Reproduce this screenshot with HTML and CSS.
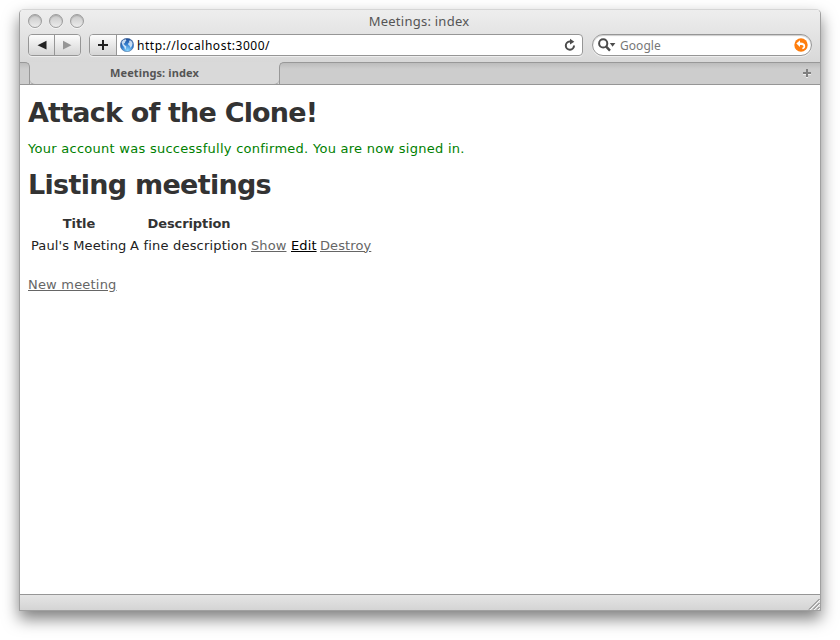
FILE: index.html
```html
<!DOCTYPE html>
<html lang="en">
<head>
<meta charset="utf-8">
<title>Meetings: index</title>
<link rel="stylesheet" href="styles.css">
</head>
<body>
<div class="window">
  <header class="chrome">
    <div class="titlebar">
      <div class="lights"><i></i><i></i><i></i></div>
      <span class="window-title">Meetings: index</span>
    </div>
    <div class="toolbar">
      <div class="nav">
        <button class="nav-button" aria-label="Back"><svg width="26" height="20" viewBox="0 0 26 20"><path d="M8.500 10.200 17.500 5.800v8.800z" fill="#222"/></svg></button>
        <button class="nav-button" aria-label="Forward"><svg width="26" height="20" viewBox="0 0 26 20"><path d="M16.500 10.200 8 5.800v8.800z" fill="#969696"/></svg></button>
      </div>
      <div class="address">
        <button class="add" aria-label="Add bookmark"><svg width="26" height="20" viewBox="0 0 26 20"><path d="M13 5v10M8 10h10" stroke="#222" stroke-width="2"/></svg></button>
        <svg class="globe" width="14" height="14" viewBox="0 0 14 14">
          <defs><radialGradient id="sea" cx=".55" cy=".9" r=".9"><stop offset="0" stop-color="#8ad6ff"/><stop offset=".5" stop-color="#3580d0"/><stop offset="1" stop-color="#1c4a96"/></radialGradient></defs>
          <circle cx="7" cy="7" r="6.700" fill="url(#sea)" stroke="#42628f" stroke-width=".5"/>
          <path d="M1.500 4.200 3.300 2 5.800 1.300 6.400 2.500 5.200 3.700 4.900 5 3.500 5.800 4.600 7 6.300 8.500 6 10.300 5.200 11.700 4.300 9.200 2.600 7.300zM8.700 2.700l2.300-.2 1.600 2.500-.4 2.500-1.500 2.500-1.100-2.300-1.400-.9.100-1.700 1.300-.9z" fill="#e2f0fb" opacity=".85"/>
        </svg>
        <span class="url">http://localhost:3000/</span>
        <svg class="reload" width="12" height="14" viewBox="0 0 12 14"><path d="M6.500 3.500H5.700a4.100 4.100 0 1 0 4.300 4" fill="none" stroke="#4c4c4c" stroke-width="2"/><path d="M6 .8 10.300 3.700 6 6.600z" fill="#4c4c4c"/></svg>
      </div>
      <div class="search">
        <svg width="18" height="14" viewBox="0 0 18 14"><circle cx="5.200" cy="5.400" r="4.100" fill="none" stroke="#4c4c4c" stroke-width="2"/><path d="m8.200 8.600 3.800 4" stroke="#4c4c4c" stroke-width="2.400"/><path d="M11.800 5h5.600L14.600 8.800z" fill="#4c4c4c"/></svg>
        <span class="placeholder">Google</span>
        <svg class="snapback" width="14" height="14" viewBox="0 0 14 14"><circle cx="7" cy="7" r="6.700" fill="#ff7e0d"/><path d="M2.300 5.600 6 2.300v2.300c3.600 0 5.200 1.300 5.200 3.600 0 1.700-1 2.900-2.900 3.100V9.700c.8-.2 1.200-.6 1.200-1.200 0-1.200-1.200-1.500-3.500-1.500v2z" fill="#fff"/></svg>
      </div>
    </div>
  </header>
  <div class="tabs">
    <div class="tab-edge"></div>
    <div class="tab">Meetings: index</div>
    <div class="tab-rest"><svg width="8" height="9" viewBox="0 0 8 9"><path d="M4 1v8M0 5h8" stroke="#eee" stroke-width="2"/><path d="M4 0v8M0 4h8" stroke="#7f7f7f" stroke-width="2"/></svg></div>
  </div>
  <main class="page">
    <h1 class="site">Attack of the Clone!</h1>
    <p class="notice">Your account was successfully confirmed. You are now signed in.</p>
    <h1 class="listing">Listing meetings</h1>
    <table class="meetings">
      <colgroup><col class="c1"><col class="c2"><col class="c3"><col class="c4"><col class="c5"></colgroup>
      <tr><th>Title</th><th>Description</th></tr>
      <tr><td>Paul's Meeting</td><td>A fine description</td><td><a href="#">Show</a></td><td><a class="hover" href="#">Edit</a></td><td><a href="#">Destroy</a></td></tr>
    </table>
    <a class="new" href="#">New meeting</a>
  </main>
  <footer class="status"><svg width="12" height="12" viewBox="0 0 12 12"><path d="M2 12 12 2M6 12l6-6M10 12l2-2" stroke="#f5f5f5"/><path d="M1 11.500 11.500 1M5 11.500 11.500 5M9 11.500 11.500 9" stroke="#707070" stroke-width="1"/></svg></footer>
</div>
</body>
</html>
```
FILE: styles.css
```css
* { box-sizing: border-box; }
html, body { margin: 0; height: 100%; background: #fff; overflow: hidden; }
body { padding: 9px 19px; }
svg { display: block; flex: none; }
.window {
  width: 802px; height: 602px;
  display: flex; flex-direction: column;
  border: 1px solid #a0a0a0; border-top-color: #d5d5d5;
  border-radius: 5px 5px 0 0;
  overflow: hidden;
  background: #fff;
  box-shadow: 0 8px 16px rgba(0,0,0,.5);
  font-family: "Noto Sans", "Open Sans", sans-serif;
}
.chrome { height: 52px; background: linear-gradient(#eeeeee, #d8d8d8); }
.titlebar { height: 24px; display: grid; grid-template-columns: 79px 1fr 81px; }
.lights { display: flex; gap: 7px; padding: 4px 0 0 8px; }
.lights i { flex: none; width: 14px; height: 14px; border: 1px solid #9c9c9c; border-radius: 50%; background: linear-gradient(#c8c8c8, #ececec); box-shadow: 0 1px 0 #f6f6f6, inset 0 1px 1px #aaa; }
.window-title { text-align: center; font-size: 13px; line-height: 22px; color: #555; letter-spacing: .25px; }
.toolbar { display: flex; padding: 0 8px; height: 22px; }
.nav { display: flex; width: 53px; border: 1px solid #969696; border-radius: 4px; overflow: hidden; box-shadow: 0 1px 0 #eee; }
.nav-button, .add { border: 0; padding: 0; background: linear-gradient(#fcfcfc, #d5d5d5); display: flex; flex: none; }
.nav-button { width: 25px; }
.nav-button:first-child { width: 26px; border-right: 1px solid #969696; }
.address { width: 494px; margin-left: 8px; display: flex; align-items: center; border: 1px solid #969696; border-radius: 4px; background: #fff; overflow: hidden; box-shadow: 0 1px 0 #eee; }
.add { width: 27px; height: 20px; border-right: 1px solid #969696; }
.globe { margin-left: 3px; }
.url { margin-left: 3px; padding-top: 1px; font-size: 12px; line-height: 20px; color: #000; letter-spacing: .53px; }
.reload { margin: 0 6px 0 auto; }
.search { width: 220px; margin-left: 9px; padding: 0 3px 0 5px; display: flex; align-items: center; border: 1px solid #969696; border-radius: 11px; background: #fff; box-shadow: 0 1px 0 #eee, inset 0 1px 1px #ccc; }
.placeholder { margin-left: 4px; padding-top: 1px; font-size: 12px; line-height: 20px; color: #777; letter-spacing: .05px; }
.snapback { margin-left: auto; }
.tabs { height: 23px; display: flex; background: #d9d9d9; border-bottom: 1px solid #969696; }
.tab-edge { width: 10px; background: linear-gradient(#bcbcbc, #cdcdcd 6px); border: solid #989898; border-width: 1px 1px 0 0; border-radius: 0 5px 0 0; }
.tab { width: 249px; text-align: center; font-size: 11px; line-height: 21px; font-weight: 700; color: #555; letter-spacing: .12px; border: solid #989898; border-width: 0 0 1px 0; border-radius: 0 0 5px 5px; margin-bottom: -1px; }
.tab-rest { flex: 1; display: flex; justify-content: flex-end; padding: 6px 9px 0 0; background: linear-gradient(#bcbcbc, #cdcdcd 6px); border: solid #989898; border-width: 1px 0 0 1px; border-radius: 5px 0 0 0; }
.page { flex: 1; padding: 10px 8px; font: 13px/18px "DejaVu Sans", Verdana, sans-serif; letter-spacing: .27px; color: #333; white-space: nowrap; }
.page h1 { margin: 0; font-size: 27px; line-height: 36px; font-weight: 700; letter-spacing: -.8px; }
.page h1.listing { letter-spacing: -.7px; }
.notice { margin: 9px 0; color: green; }
.meetings { margin-top: 8px; border-spacing: 3px; border-collapse: separate; table-layout: fixed; width: 347px; color: #222; }
.meetings th, .meetings td { padding: 0; height: 19px; font-size: 13px; line-height: 18px; text-align: left; }
.meetings td { letter-spacing: .1px; }
.meetings td:nth-child(2) { letter-spacing: .2px; }
.meetings th { text-align: center; letter-spacing: -.1px; color: #333; }
.c1 { width: 96px; }
.c2 { width: 118px; }
.c3 { width: 37px; }
.c4 { width: 26px; }
.c5 { width: 52px; }
.page a { color: #666; text-decoration: underline; text-underline-offset: 1px; }
.page a.hover { color: #000; }
.new { display: inline-block; margin-top: 18px; letter-spacing: .2px; }
.status { height: 16px; display: flex; justify-content: flex-end; align-items: flex-end; border-top: 1px solid #969696; background: linear-gradient(#e5e5e5, #d4d4d4); }
```
